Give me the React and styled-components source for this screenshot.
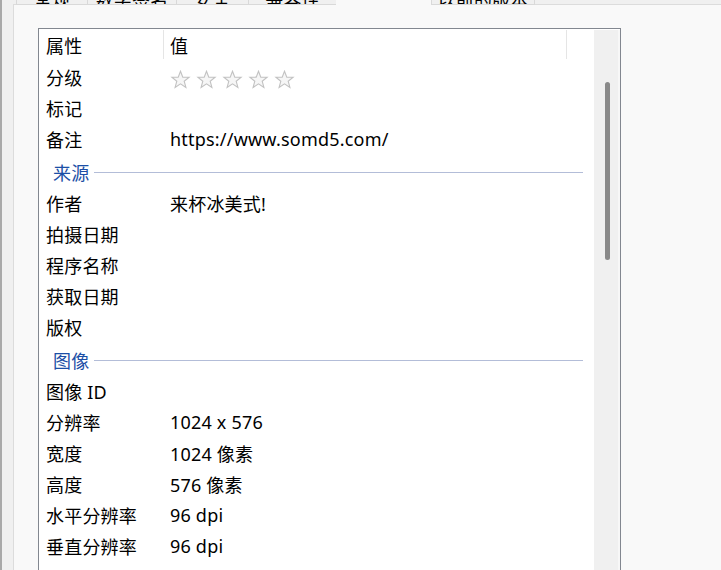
import styled, { createGlobalStyle } from 'styled-components';

const GlobalStyle = createGlobalStyle`
  html, body {
    margin: 0;
    padding: 0;
    height: 570px;
    overflow: hidden;
    background: #f0f0f0;
  }
  body {
    font-family: "Noto Sans", "Noto Sans CJK SC", sans-serif;
    font-size: 18px;
    letter-spacing: 0.2px;
    color: #000;
  }
`;

const Window = styled.div`
  height: 570px;
  border-left: 2px solid #a9a9a9;
  padding-left: 11px;
  display: flex;
  flex-direction: column;
  box-sizing: border-box;
`;

const TabStrip = styled.div`
  display: flex;
  height: 5px;
  padding-left: 4px;
  margin-bottom: -1px;
  position: relative;
  z-index: 1;
`;

const Tab = styled.div`
  width: ${(p) => p.w}px;
  height: ${(p) => (p.selected ? 6 : 5)}px;
  box-sizing: border-box;
  margin-left: -1px;
  border-top: none;
  border-bottom: ${(p) => (p.selected ? 'none' : '1px solid #d9d9d9')};
  border-left: ${(p) => (p.selected ? 'none' : '1px solid #d9d9d9')};
  border-right: ${(p) => (p.selected ? 'none' : '1px solid #d9d9d9')};
  background: ${(p) => (p.selected ? '#f9f9f9' : '#f0f0f0')};
  overflow: hidden;
  display: flex;
  align-items: flex-end;
  justify-content: center;
`;

const TabLabel = styled.span`
  display: block;
  line-height: 18px;
  margin-bottom: -4px;
  font-family: "Noto Sans CJK SC", sans-serif;
  font-size: 18px;
  white-space: nowrap;
  color: ${(p) => (p.selected ? 'transparent' : '#000')};
`;

const Panel = styled.div`
  flex: 1;
  background: #f9f9f9;
  border-top: 1px solid #dcdcdc;
  border-left: 1px solid #dcdcdc;
  padding: 23px 0 0 24px;
  overflow: hidden;
`;

const ListBox = styled.div`
  width: 583px;
  height: 620px;
  box-sizing: border-box;
  border: 1px solid #828790;
  background: #fff;
  padding: 1px 0 0 0;
  display: flex;
`;

const Content = styled.div`
  flex: 1;
  display: flex;
  flex-direction: column;
`;

const HeaderRow = styled.div`
  display: flex;
  height: 31px;
  align-items: stretch;
`;

const HeaderCell = styled.div`
  width: ${(p) => p.w}px;
  flex: ${(p) => (p.w ? 'none' : 1)};
  box-sizing: border-box;
  padding-left: ${(p) => p.pad}px;
  padding-top: 1px;
  display: flex;
  align-items: center;
  border-right: ${(p) => (p.divider ? '1px solid #e5e5e5' : 'none')};
  margin-bottom: 2px;
`;

const Row = styled.div`
  display: flex;
  height: 31px;
  align-items: center;
  padding-top: 1px;
  box-sizing: border-box;
`;

const NameCell = styled.div`
  width: 125px;
  padding-left: 7px;
  box-sizing: border-box;
  white-space: nowrap;
`;

const ValueCell = styled.div`
  flex: 1;
  padding-left: 6px;
  display: flex;
  align-items: center;
  gap: 5px;
  white-space: nowrap;
`;

const StarBox = styled.span`
  display: flex;
  margin-top: 4px;
`;

const SectionRow = styled.div`
  display: flex;
  height: 33px;
  align-items: center;
  padding: 3px 11px 0 14px;
  box-sizing: border-box;
`;

const SectionLabel = styled.span`
  color: #1c4fa6;
`;

const SectionLine = styled.div`
  flex: 1;
  height: 1px;
  background: #b3bdd8;
  margin-left: 5px;
`;

const ScrollTrack = styled.div`
  width: 26px;
  background: #f0f0f0;
  border-right: 2px solid #f7f7f7;
  display: flex;
  justify-content: center;
  padding-top: 52px;
  box-sizing: border-box;
`;

const ScrollThumb = styled.div`
  width: 5px;
  height: 178px;
  border-radius: 3px;
  background: #898989;
  margin-left: 2px;
`;

const Star = () => (
  <StarBox>
    <svg width="21" height="19" viewBox="0 0 20 19">
      <path
        d="M10 1.2 L12.3 7.1 L18.6 7.3 L13.7 11.2 L15.4 17.4 L10 13.8 L4.6 17.4 L6.3 11.2 L1.4 7.3 L7.7 7.1 Z"
        fill="#f6f6f6"
        stroke="#c2c2c2"
        strokeWidth="1.1"
      />
    </svg>
  </StarBox>
);

const tabs = [
  { label: '常规', w: 72 },
  { label: '数字签名', w: 90 },
  { label: '安全', w: 73 },
  { label: '兼容性', w: 89 },
  { label: '详细信息', w: 96, selected: true },
  { label: '以前的版本', w: 104 },
];

const sections = [
  {
    rows: [
      ['分级', 'stars'],
      ['标记', ''],
      ['备注', 'https://www.somd5.com/'],
    ],
  },
  {
    title: '来源',
    rows: [
      ['作者', '来杯冰美式!'],
      ['拍摄日期', ''],
      ['程序名称', ''],
      ['获取日期', ''],
      ['版权', ''],
    ],
  },
  {
    title: '图像',
    rows: [
      ['图像 ID', ''],
      ['分辨率', '1024 x 576'],
      ['宽度', '1024 像素'],
      ['高度', '576 像素'],
      ['水平分辨率', '96 dpi'],
      ['垂直分辨率', '96 dpi'],
    ],
  },
];

const App = () => {
  return (
    <>
      <GlobalStyle />
      <Window>
        <TabStrip>
          {tabs.map((t) => (
            <Tab key={t.label} w={t.w} selected={t.selected}>
              <TabLabel selected={t.selected}>{t.label}</TabLabel>
            </Tab>
          ))}
        </TabStrip>
        <Panel>
          <ListBox>
            <Content>
              <HeaderRow>
                <HeaderCell w={125} pad={7} divider>
                  属性
                </HeaderCell>
                <HeaderCell w={403} pad={6} divider>
                  值
                </HeaderCell>
                <HeaderCell />
              </HeaderRow>
              {sections.map((s, i) => (
                <div key={i}>
                  {s.title && (
                    <SectionRow>
                      <SectionLabel>{s.title}</SectionLabel>
                      <SectionLine />
                    </SectionRow>
                  )}
                  {s.rows.map(([name, value]) => (
                    <Row key={name}>
                      <NameCell>{name}</NameCell>
                      <ValueCell>
                        {value === 'stars'
                          ? [0, 1, 2, 3, 4].map((n) => <Star key={n} />)
                          : value}
                      </ValueCell>
                    </Row>
                  ))}
                </div>
              ))}
            </Content>
            <ScrollTrack>
              <ScrollThumb />
            </ScrollTrack>
          </ListBox>
        </Panel>
      </Window>
    </>
  );
};

export default App;
